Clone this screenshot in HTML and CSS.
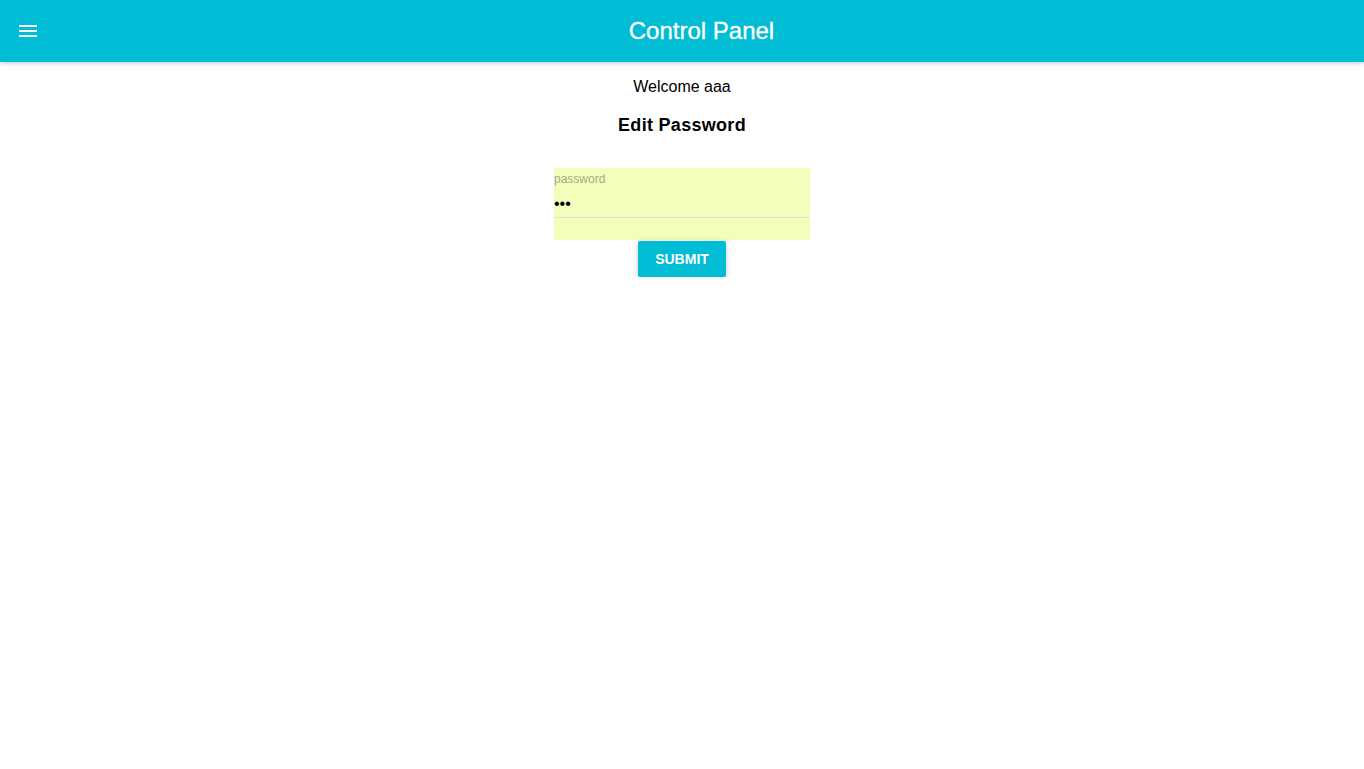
FILE: index.html
```html
<!DOCTYPE html>
<html>
<head>
<meta charset="utf-8">
<title>Control Panel</title>
<link rel="stylesheet" href="styles.css">
</head>
<body>
<header class="appbar">
  <button class="menu-btn" aria-label="menu">
    <svg width="24" height="24" viewBox="0 0 24 24"><path fill="#fff" d="M3 18h18v-2H3v2zm0-5h18v-2H3v2zm0-7v2h18V6H3z"/></svg>
  </button>
  <h1 class="title">Control Panel</h1>
</header>
<main class="content">
  <p class="welcome">Welcome aaa</p>
  <h3 class="heading">Edit Password</h3>
  <form class="form">
    <div class="field">
      <label class="field-label">password</label>
      <div class="field-input">•••</div>
      <div class="field-line"></div>
    </div>
    <button type="button" class="submit">SUBMIT</button>
  </form>
</main>
</body>
</html>
```
FILE: styles.css
```css
html, body {
  margin: 0;
  padding: 0;
  background: #fff;
  font-family: "Liberation Sans", Arial, Helvetica, sans-serif;
}
.appbar {
  height: 62px;
  background: #00bcd4;
  display: flex;
  align-items: center;
  padding: 0 16px;
  box-sizing: border-box;
  box-shadow: 0 1px 6px rgba(0,0,0,0.12), 0 1px 4px rgba(0,0,0,0.12);
  position: relative;
  z-index: 1;
}
.menu-btn {
  width: 48px;
  height: 48px;
  padding: 12px;
  margin-left: -12px;
  margin-top: -1px;
  border: 0;
  background: transparent;
  display: flex;
  align-items: center;
  justify-content: center;
}
.title {
  flex: 1;
  margin: 0 0 0 3px;
  text-align: center;
  color: #fff;
  font-size: 24px;
  font-weight: normal;
  line-height: 60px;
  -webkit-text-stroke: 0.3px #fff;
}
.content {
  display: flex;
  flex-direction: column;
  align-items: center;
}
.welcome {
  margin: 16px 0 0;
  font-size: 16px;
  line-height: 18px;
  color: #000;
}
.heading {
  margin: 19px 0 0;
  font-size: 18px;
  font-weight: bold;
  line-height: 21px;
  letter-spacing: 0.3px;
  color: #000;
}
.form {
  margin-top: 32px;
  display: flex;
  flex-direction: column;
  align-items: center;
}
.field {
  width: 256px;
  height: 72px;
  background: #f4fdba;
  display: flex;
  flex-direction: column;
  box-sizing: border-box;
  padding-top: 4px;
}
.field-label {
  font-size: 12px;
  line-height: 14px;
  color: #a4ab8a;
}
.field-input {
  margin-top: 8px;
  font-size: 16px;
  line-height: 20px;
  height: 20px;
  color: #000;
  letter-spacing: 0;
}
.field-line {
  margin-top: 3px;
  height: 1px;
  background: #e0e0e0;
}
.submit {
  margin-top: 1px;
  width: 88px;
  height: 36px;
  border: 0;
  border-radius: 2px;
  background: #00bcd4;
  color: #fff;
  font-family: "Liberation Sans", Arial, Helvetica, sans-serif;
  font-size: 14px;
  font-weight: bold;
  padding: 0;
  box-shadow: 0 1px 6px rgba(0,0,0,0.12), 0 1px 4px rgba(0,0,0,0.12);
}
```
